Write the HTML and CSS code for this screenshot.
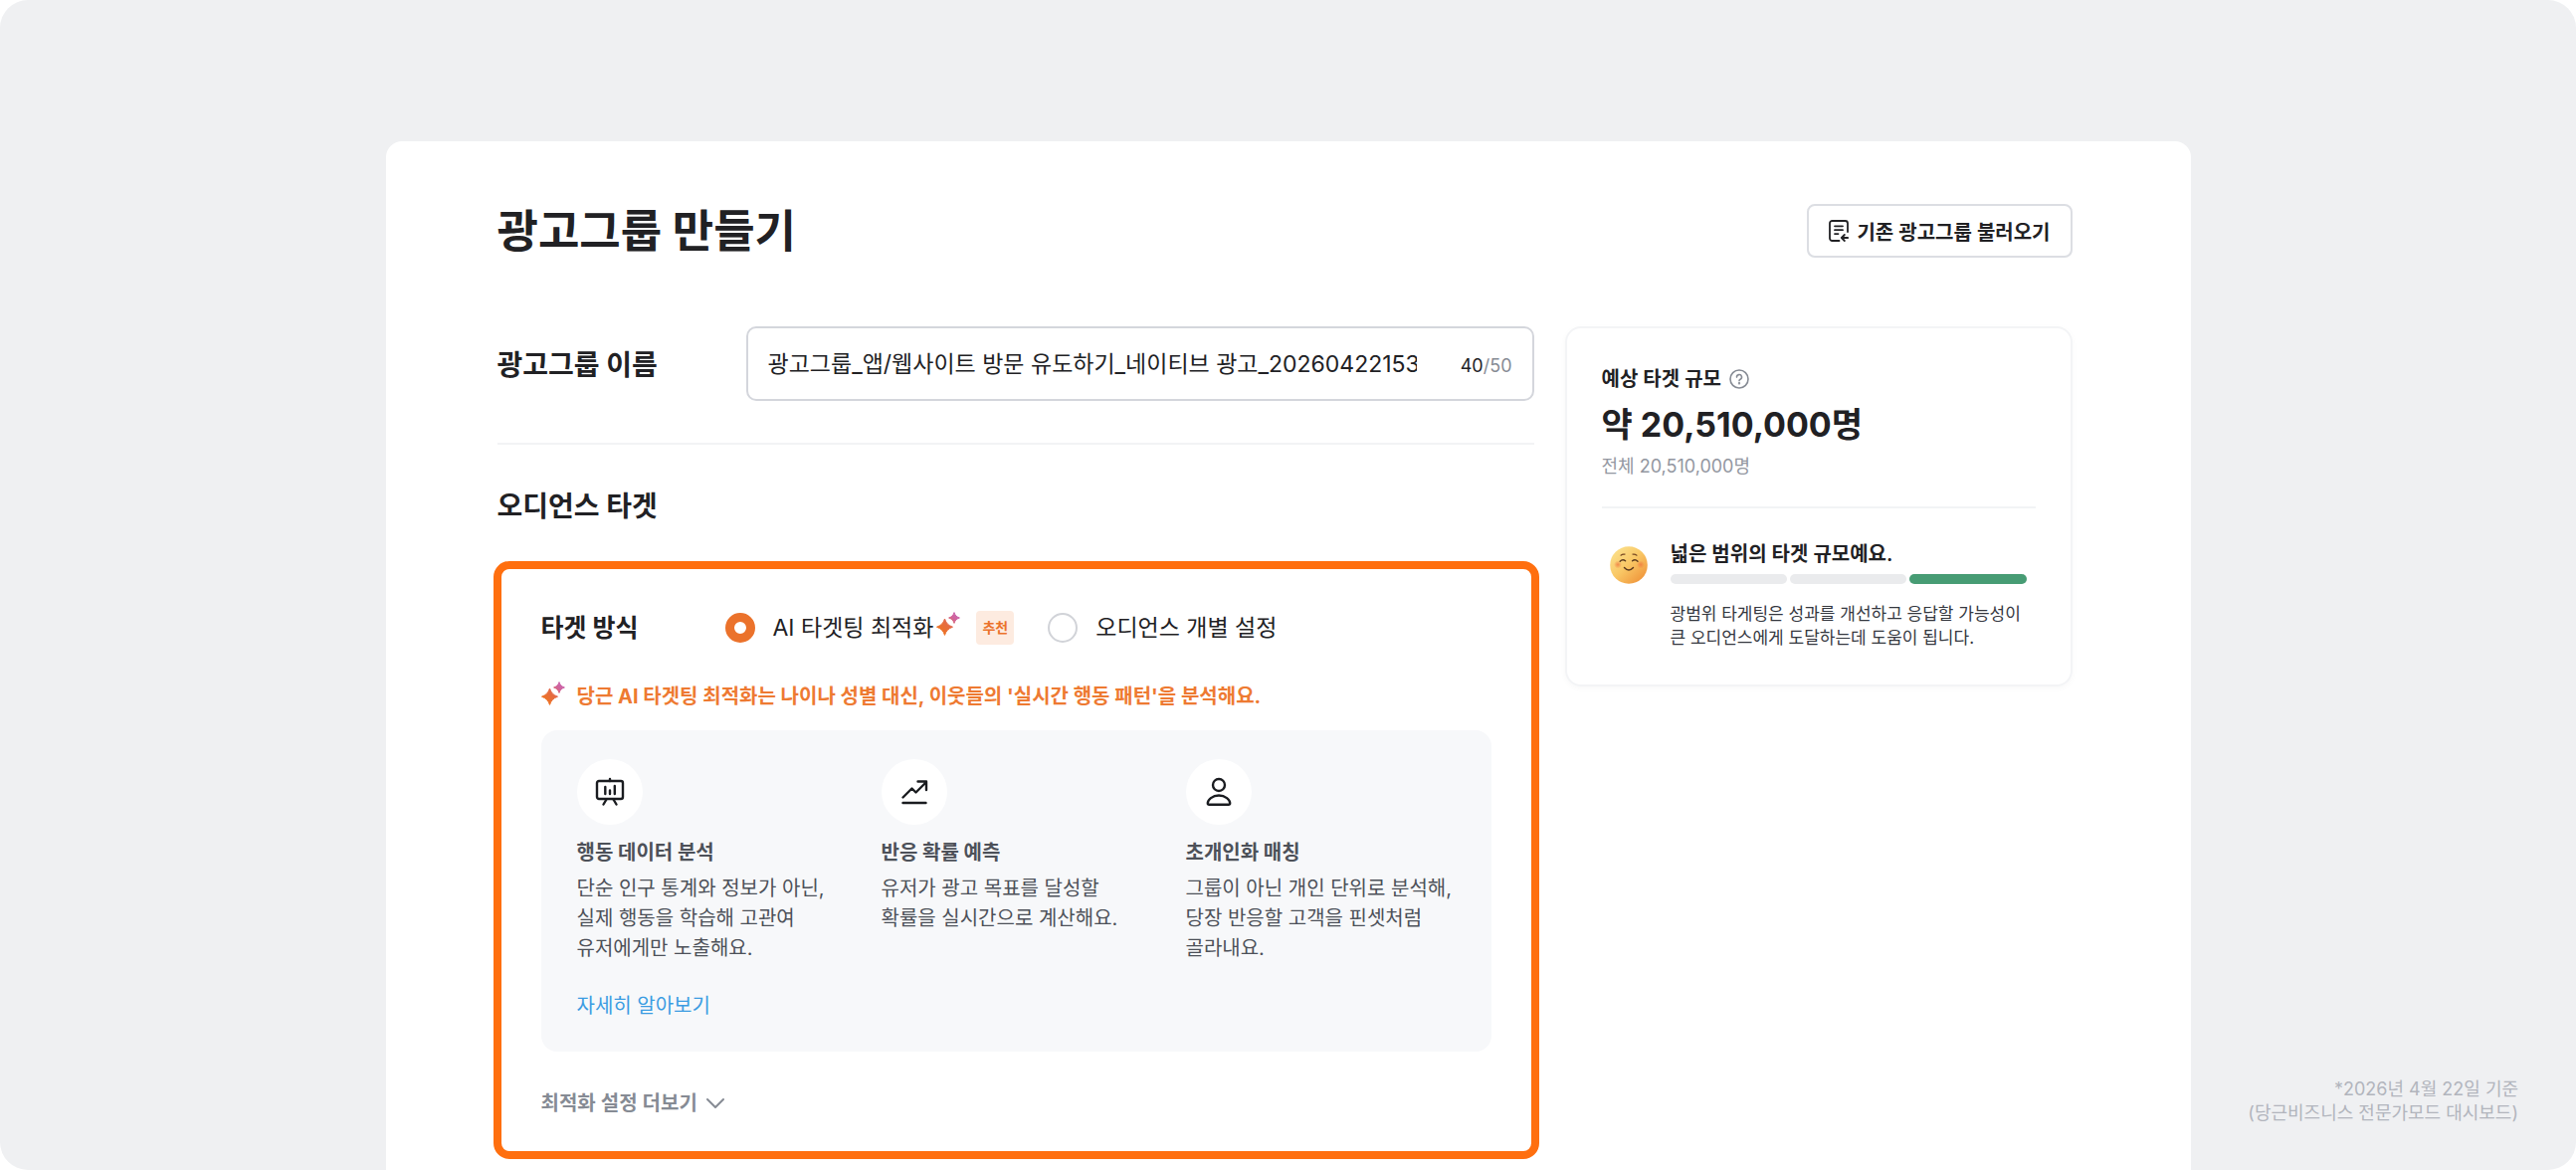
FILE: index.html
```
<!DOCTYPE html>
<html lang="ko">
	<head>
		<meta charset="utf-8">
		<meta name="viewport" content="width=device-width, initial-scale=1">
		<title>광고그룹 만들기</title>
		<link rel="stylesheet" href="styles.css">
	</head>
	<body>
		<!-- gradients and shapes shared by the icons -->
		<svg class="defs" width="0" height="0" aria-hidden="true">
			<defs>
				<linearGradient id="sparkle-fill" gradientUnits="userSpaceOnUse" x1="4" y1="20" x2="21" y2="3">
					<stop offset="0" stop-color="#ee7321"/>
					<stop offset="0.45" stop-color="#e46a45"/>
					<stop offset="0.8" stop-color="#d0649c"/>
					<stop offset="1" stop-color="#cb66ae"/>
				</linearGradient>
				<symbol id="sparkle" viewBox="0 0 24 24">
					<path fill="url(#sparkle-fill)" stroke="url(#sparkle-fill)" stroke-linejoin="round" d="M8.500 7C10 11.500 12 13.500 16.500 15.200C12 16.900 10 18.900 8.500 23.400C7 18.900 5 16.900 0.500 15.200C5 13.500 7 11.500 8.500 7Z"/>
					<path fill="url(#sparkle-fill)" stroke="url(#sparkle-fill)" stroke-linejoin="round" d="M18 0.600C19 3.600 20.300 4.900 23.400 6C20.300 7.100 19 8.400 18 11.400C17 8.400 15.700 7.100 12.600 6C15.700 4.900 17 3.600 18 0.600Z"/>
				</symbol>
			</defs>
		</svg>

		<div class="page">
			<main class="panel">
				<header class="panel-header">
					<h1>광고그룹 만들기</h1>
					<button type="button" class="load-btn">
						<svg width="20" height="22" viewBox="0 0 20 22" fill="none" stroke="#212124" stroke-width="1.800" stroke-linecap="round" stroke-linejoin="round">
							<path d="M19 12V3.500A2.500 2.500 0 0 0 16.500 1H3.500A2.500 2.500 0 0 0 1 3.500v15A2.500 2.500 0 0 0 3.500 21H10.500"/>
							<path d="M6 6.300h8M6 10.200h8M6 14.100h3.500M19.200 18h-6M15.800 15l-3 3 3 3"/>
						</svg>
						기존 광고그룹 불러오기
					</button>
				</header>

				<div class="columns">
					<div class="form">
						<div class="name-row">
							<label class="section-title" for="group-name">광고그룹 이름</label>
							<div class="name-field">
								<input type="text" id="group-name" maxlength="50" value="광고그룹_앱/웹사이트 방문 유도하기_네이티브 광고_202604221530815">
								<span class="counter"><span>40</span>/50</span>
							</div>
						</div>

						<h2 class="section-title">오디언스 타겟</h2>

						<section class="target-box">
							<div class="method-row" role="radiogroup" aria-labelledby="method-title">
								<h3 id="method-title">타겟 방식</h3>
								<div class="option">
									<input type="radio" id="method-ai" name="method" checked>
									<label for="method-ai">AI 타겟팅 최적화</label>
									<svg class="sparkle" width="24" height="24"><use href="#sparkle"/></svg>
									<span class="badge">추천</span>
								</div>
								<div class="option">
									<input type="radio" id="method-each" name="method">
									<label for="method-each">오디언스 개별 설정</label>
								</div>
							</div>

							<p class="notice">
								<svg class="sparkle" width="24" height="24"><use href="#sparkle"/></svg>
								당근 AI 타겟팅 최적화는 나이나 성별 대신, 이웃들의 '실시간 행동 패턴'을 분석해요.
							</p>

							<ul class="features">
								<li>
									<div class="feature-icon">
										<svg width="30" height="30" viewBox="0 0 30 30" fill="none" stroke="#1a1c20" stroke-width="2.400" stroke-linecap="round" stroke-linejoin="round">
											<rect x="2" y="4" width="26" height="18" rx="2"/>
											<path d="M15 2v2M11.500 22.500l-3 5M18.500 22.500l3 5M10.300 10v7M15 13.500v3.500M19.800 9v8"/>
										</svg>
									</div>
									<h4>행동 데이터 분석</h4>
									<p>단순 인구 통계와 정보가 아닌,<br>실제 행동을 학습해 고관여<br>유저에게만 노출해요.</p>
									<a href="#">자세히 알아보기</a>
								</li>
								<li>
									<div class="feature-icon">
										<svg width="30" height="30" viewBox="0 0 30 30" fill="none" stroke="#1a1c20" stroke-width="2.400" stroke-linecap="round" stroke-linejoin="round">
											<path d="M3.500 20.500L12.500 11.500L16.500 15.500L26.500 5.500M18.500 4.500h8.500v8.500M3.500 26h23"/>
										</svg>
									</div>
									<h4>반응 확률 예측</h4>
									<p>유저가 광고 목표를 달성할<br>확률을 실시간으로 계산해요.</p>
								</li>
								<li>
									<div class="feature-icon">
										<svg width="30" height="30" viewBox="0 0 30 30" fill="none" stroke="#1a1c20" stroke-width="2.400" stroke-linecap="round" stroke-linejoin="round">
											<circle cx="15" cy="8" r="6"/>
											<path d="M15 18.500C8.500 18.500 3.800 23 3.800 26.300Q3.800 27.800 5.300 27.800H24.700Q26.200 27.800 26.200 26.300C26.200 23 21.500 18.500 15 18.500Z"/>
										</svg>
									</div>
									<h4>초개인화 매칭</h4>
									<p>그룹이 아닌 개인 단위로 분석해,<br>당장 반응할 고객을 핀셋처럼<br>골라내요.</p>
								</li>
							</ul>

							<button type="button" class="more-btn">
								최적화 설정 더보기
								<svg width="18" height="12" viewBox="0 0 18 12" fill="none" stroke="#868b94" stroke-width="2" stroke-linecap="round" stroke-linejoin="round"><path d="M1 2l8 8 8-8"/></svg>
							</button>
						</section>
					</div>

					<aside class="estimate">
						<h3>
							예상 타겟 규모
							<svg width="20" height="20" viewBox="0 0 20 20" fill="none" stroke="#868b94" stroke-width="1.600" stroke-linecap="round" stroke-linejoin="round">
								<circle cx="10" cy="10" r="9"/>
								<path d="M7.500 8.100a2.500 2.500 0 1 1 3.600 2.200c-0.800 0.400-1.100 0.800-1.100 1.500"/>
								<circle cx="10" cy="14.200" r="0.400" fill="#868b94"/>
							</svg>
						</h3>
						<strong class="estimate-value">약 20,510,000명</strong>
						<p class="estimate-total">전체 20,510,000명</p>
						<div class="range">
							<svg class="face" width="38" height="38" viewBox="0 0 38 38" fill="none" stroke-linecap="round">
								<defs>
									<linearGradient id="face-fill" x1="0.100" y1="0.100" x2="0.850" y2="0.900">
										<stop offset="0" stop-color="#fbe08a"/>
										<stop offset="0.500" stop-color="#f9c765"/>
										<stop offset="1" stop-color="#f0973c"/>
									</linearGradient>
									<radialGradient id="cheek-fill">
										<stop offset="0" stop-color="#f0793f" stop-opacity="0.800"/>
										<stop offset="1" stop-color="#f0793f" stop-opacity="0"/>
									</radialGradient>
								</defs>
								<circle cx="19" cy="19" r="18.800" fill="url(#face-fill)"/>
								<circle cx="8" cy="18.500" r="4" fill="url(#cheek-fill)"/>
								<circle cx="31" cy="18.500" r="4" fill="url(#cheek-fill)"/>
								<path stroke="#7a4a23" stroke-width="1.200" d="M11 9.200q1.800-1.600 4-1M23 8.200q2.200-0.600 4 1"/>
								<path stroke="#5b3a1e" stroke-width="1.400" d="M10.200 15.200q2.600-2.600 5.400-0.400M22.600 14.800q2.800-2.200 5.400 0.400M14.500 21.500q4.500 5 9 0"/>
							</svg>
							<div class="range-body">
								<h4>넓은 범위의 타겟 규모예요.</h4>
								<div class="steps"><i></i><i></i><i class="on"></i></div>
								<p>광범위 타게팅은 성과를 개선하고 응답할 가능성이<br>큰 오디언스에게 도달하는데 도움이 됩니다.</p>
							</div>
						</div>
					</aside>
				</div>
			</main>

			<p class="footnote">*2026년 4월 22일 기준<br>(당근비즈니스 전문가모드 대시보드)</p>
		</div>
	</body>
</html>
```
FILE: styles.css
```
* {box-sizing:border-box;}
body {margin:0;background-color:#fff;color:#212124;font-family:Inter,"Noto Sans CJK KR",sans-serif;font-size:20px;line-height:30px;}
h1,h2,h3,h4,p,ul {margin:0;padding:0;font-weight:inherit;font-size:inherit;}
ul {list-style:none;}
svg {flex:none;}
input,button {font-family:inherit;color:inherit;}
button {background:none;border:0;padding:0;cursor:pointer;}
a {color:#3b9ce2;text-decoration:none;}
a:hover {text-decoration:underline;}
.defs {position:absolute;}

.page {display:grid;grid-template-columns:1fr minmax(0,1814px) 1fr;min-height:100vh;padding-top:142px;background-color:#eff0f2;border-radius:28px;}
.panel {grid-column:2;padding:63px 119px 11px 112px;background-color:#fff;border-radius:16px 16px 0 0;}
.footnote {align-self:end;padding:0 58px 45px 0;color:#b2b5bd;font-size:18px;line-height:24px;text-align:right;white-space:nowrap;}

.panel-header {display:flex;align-items:center;justify-content:space-between;margin-bottom:69px;}
.panel-header h1 {padding-top:2px;font-size:45px;line-height:52px;font-weight:700;}
.load-btn {display:flex;align-items:center;gap:8px;height:54px;padding:0 20px;border:2px solid #dcdee3;border-radius:8px;font-size:20px;font-weight:600;}

.columns {display:grid;grid-template-columns:minmax(0,1fr) 510px;gap:31px;align-items:start;}
.section-title {padding-top:2px;font-size:28px;line-height:38px;font-weight:700;}
.name-row {display:flex;align-items:center;padding-bottom:42px;border-bottom:2px solid #f2f3f5;margin-bottom:41px;}
.name-row .section-title {flex:0 0 250px;}
.name-field {display:flex;flex:1;align-items:center;justify-content:space-between;height:75px;padding:0 20px;border:2px solid #d4d6dc;border-radius:10px;}
.name-field input {width:652px;min-width:0;padding:0;border:0;outline:0;background:none;font-size:23px;line-height:30px;}
.counter {padding-top:4px;color:#868b94;font-size:18px;}
.counter span {color:#212124;}

.target-box {margin:36px -5px 0 -4px;padding:42px 40px 33px;border:8px solid #ff6f0f;border-radius:16px;}
.method-row {display:flex;align-items:center;height:34px;}
.method-row h3 {width:185px;font-size:25px;font-weight:700;}
.option {display:flex;align-items:center;margin-right:34px;font-size:23px;}
.option input {appearance:none;width:30px;height:30px;margin:0 18px 0 0;border:2px solid #d1d3d8;border-radius:50%;background-color:#fff;}
.option input:checked {border:9px solid #eb722b;}
.option .sparkle {margin:0 16px 8px 3px;}
.badge {padding:2px 6px;border-radius:4px;background-color:#fdebe0;color:#eb722b;font-size:14px;font-weight:700;}
.notice {display:flex;align-items:center;gap:12px;margin-top:37px;color:#ee7a32;font-weight:700;}
.notice .sparkle {margin-bottom:6px;}

.features {display:grid;grid-template-columns:repeat(3,1fr);gap:35px;margin-top:19px;padding:29px 36px 31px;border-radius:16px;background-color:#f7f8fa;color:#4d5159;white-space:nowrap;}
.feature-icon {display:flex;align-items:center;justify-content:center;width:66px;height:66px;margin-bottom:13px;border-radius:50%;background-color:#fff;}
.features h4 {margin-bottom:6px;font-weight:700;}
.features a {display:inline-block;margin-top:28px;}
.more-btn {display:flex;align-items:center;gap:9px;margin-top:37px;color:#868b94;font-size:20px;line-height:30px;font-weight:600;}

.estimate {padding:37px 35px 35px;border:2px solid #f3f4f6;border-radius:16px;box-shadow:0 2px 6px rgba(0,0,0,0.03);}
.estimate h3 {display:flex;align-items:center;gap:8px;font-weight:600;line-height:28px;}
.estimate-value {display:block;margin-top:10px;font-size:34px;line-height:44px;font-weight:700;}
.estimate-total {margin-top:8px;color:#9397a1;font-size:18px;line-height:24px;}
.range {display:flex;gap:23px;margin-top:28px;padding:32px 0 0 8px;border-top:2px solid #f2f3f5;}
.face {margin-top:6px;}
.range-body {flex:1;white-space:nowrap;}
.range-body h4 {font-weight:600;line-height:28px;}
.range-body p {color:#35383f;font-size:17px;line-height:24px;}
.steps {display:grid;grid-template-columns:repeat(3,1fr);gap:3px;margin:6px 9px 18px 0;}
.steps i {height:10px;border-radius:5px;background-color:#eaebed;}
.steps .on {background-color:#479c74;}
```
